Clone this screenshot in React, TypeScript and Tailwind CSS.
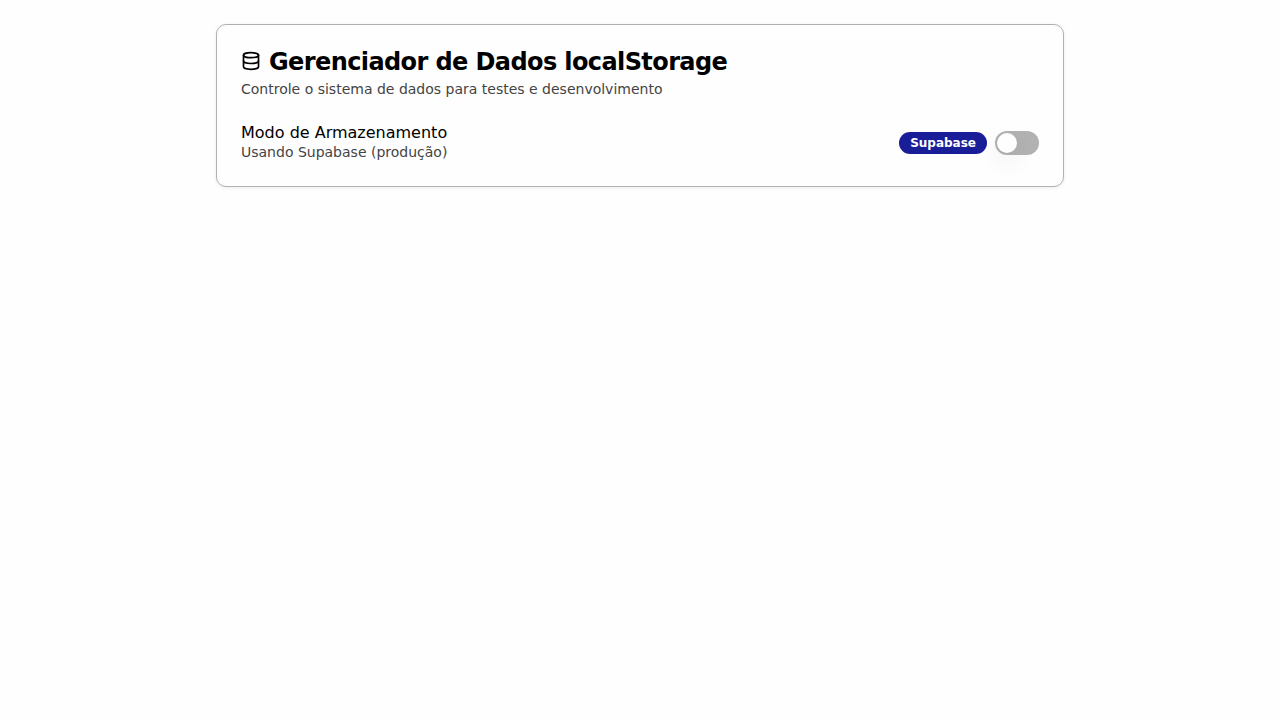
import { Database } from "lucide-react";
import * as Switch from "@radix-ui/react-switch";

export default function App() {
  return (
    <div className="min-h-screen bg-[#fefefe] font-['DejaVu_Sans',sans-serif] text-black">
      <div className="mx-auto max-w-4xl p-6">
        <div className="rounded-[10px] border border-[#b0b0b0] bg-[#fefefe] shadow-[0_1px_4px_0_rgb(0_0_0/0.07)]">
          <div className="flex flex-col space-y-1.5 p-6">
            <h3 className="flex items-center gap-2 text-2xl leading-none font-semibold tracking-tight">
              <Database className="h-5 w-5" />
              <span className="translate-y-px">Gerenciador de Dados localStorage</span>
            </h3>
            <p className="text-sm text-[#444444]">
              Controle o sistema de dados para testes e desenvolvimento
            </p>
          </div>
          <div className="p-6 pt-0">
            <div className="flex items-center justify-between">
              <div>
                <h3 className="leading-[19px] font-medium">Modo de Armazenamento</h3>
                <p className="text-sm text-[#444444]">Usando Supabase (produção)</p>
              </div>
              <div className="flex items-center gap-2">
                <div className="inline-flex items-center rounded-full border border-transparent bg-[#1a1d98] px-2.5 py-0.5 text-xs font-semibold text-[#fefefe]">
                  Supabase
                </div>
                <Switch.Root
                  aria-label="Modo de Armazenamento"
                  className="inline-flex h-6 w-11 shrink-0 items-center rounded-full border-2 border-transparent bg-[#b2b2b2]"
                >
                  <Switch.Thumb className="block h-5 w-5 rounded-full bg-[#fefefe] shadow-[0_8px_24px_0_rgb(0_0_0/0.09)]" />
                </Switch.Root>
              </div>
            </div>
          </div>
        </div>
      </div>
    </div>
  );
}
